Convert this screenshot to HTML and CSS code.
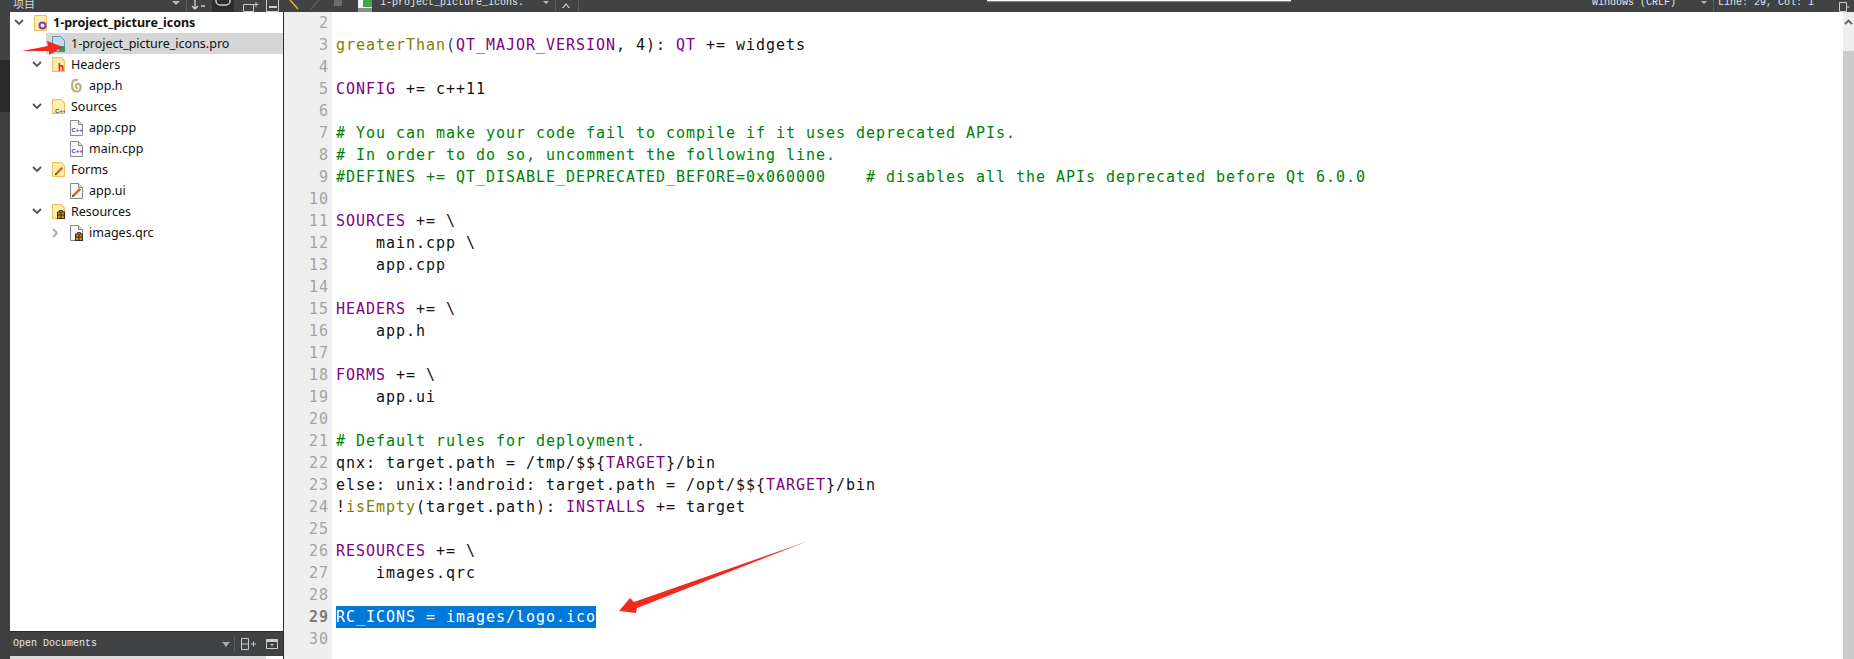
FILE: index.html
```html
<!DOCTYPE html>
<html lang="en">
<head>
<meta charset="utf-8">
<title>1-project_picture_icons.pro</title>
<link rel="stylesheet" href="styles.css">
</head>
<body>
<svg class="defs" width="0" height="0" aria-hidden="true">
  <symbol id="folder" viewBox="0 0 13 13" preserveAspectRatio="none"><path d="M.5.5h9l3 3v9H.5z" fill="#fdeeb0" stroke="#e8c35a"/></symbol>
  <symbol id="file" viewBox="0 0 13 16"><path d="M.5.5h8l4 4v11H.5z" fill="#f7f7f7" stroke="#8a8a8a"/><path d="M8.5.5v4h4" fill="#ddd" stroke="#8a8a8a"/></symbol>
  <symbol id="pencil" viewBox="0 0 12 12"><path d="M1 11l2-4 6-6 2 2-6 6z" fill="#d2691e"/><path d="M1 11l1-3 2 2z" fill="#333"/></symbol>
  <symbol id="bag" viewBox="0 0 8 9"><rect x=".5" y="2" width="7" height="6.500" fill="#c9902a" stroke="#3a2a10"/><path d="M2.500 2V.6h3V2M.5 5h7M4 2v6.500" fill="none" stroke="#3a2a10"/></symbol>
</svg>

<header class="topbar">
  <div class="panel-head">
    <span class="cn">项目</span>
    <span class="tb-right">
      <span class="tri"></span><span class="sep"></span>
      <svg class="tb-icon" width="16" height="12" viewBox="0 0 16 12"><path d="M5 0v9M2 6l3 3 3-3M11 6h4" fill="none" stroke="#ccc" stroke-width="1.400"/></svg>
      <span class="link-btn"><svg width="16" height="12" viewBox="0 0 16 12"><rect x="1" y="-4" width="14" height="9" rx="4" fill="none" stroke="#ccc" stroke-width="1.500"/></svg></span>
      <svg class="tb-icon" width="18" height="12" viewBox="0 0 18 12"><path d="M1.500 4.500h10v7h-10zM14 2v5M11.500 4.500h5" fill="none" stroke="#ccc"/></svg>
      <svg class="tb-icon" width="14" height="12" viewBox="0 0 14 12"><path d="M.5 0v11.500h12V0" fill="none" stroke="#ccc"/><path d="M3 6h8v2H3z" fill="#ccc"/></svg>
    </span>
  </div>
  <div class="edit-head">
    <svg width="12" height="10" viewBox="0 0 12 10"><path d="M2 0l8 9" stroke="#e0b520" stroke-width="1.600"/></svg>
    <svg width="12" height="10" viewBox="0 0 12 10"><path d="M2 9l8-9" stroke="#5c5e60" stroke-width="1.400"/></svg>
    <svg class="lock" width="10" height="8" viewBox="0 0 10 8"><rect width="8" height="6" x="1" fill="#6a6c6e"/></svg>
    <svg class="qt" width="14" height="12" viewBox="0 0 14 12"><path d="M0 0h14v12H0z" fill="#f4f4f4"/><path d="M5 0h9v7H5z" fill="#41a645"/><path d="M0 8h14v4H0z" fill="#8a8c8e"/></svg>
    <span class="pix doc-title">1-project_picture_icons.</span>
    <span class="tri small"></span><span class="sep"></span>
    <svg class="close" width="12" height="8" viewBox="0 0 12 8"><path d="M2 9l4-5 4 5" fill="none" stroke="#ccc" stroke-width="1.200"/></svg>
    <span class="sep"></span>
    <span class="flex-fill"></span>
    <span class="pix">Windows (CRLF)</span>
    <span class="tri small enc"></span><span class="sep"></span>
    <span class="pix line-col">Line: 29, Col: 1</span>
    <svg class="split" width="12" height="12" viewBox="0 0 12 12"><path d="M1.500 2.500h7v9h-7z" fill="none" stroke="#ccc"/><path d="M8.500 7h3" stroke="#ccc"/></svg>
  </div>
</header>

<div class="main">
  <div class="rail"><div class="rail-top"></div><div class="rail-active"></div></div>
  <aside class="sidebar">
    <div class="tree">
      <div class="row"><span class="twisty"><svg width="10" height="7" viewBox="0 0 10 7"><path d="M1 1l4 4 4-4" fill="none" stroke="#555" stroke-width="1.800"/></svg></span>
        <span class="cell root"><svg class="ic root-ic" width="13" height="16" viewBox="0 0 13 16"><path d="M.5.500h12v15H.5z" fill="#fdeeb0" stroke="#e8c35a"/><circle cx="8.500" cy="10.500" r="3" fill="none" stroke="#7a3db8" stroke-width="2"/></svg><b>1-project_picture_icons</b></span></div>

      <div class="row l1"><span class="twisty"></span>
        <span class="cell selected"><svg class="ic" width="13" height="16" viewBox="0 0 13 16"><path d="M.5.500h8l4 4v11H.5z" fill="#bcdcf5" stroke="#5f92b8"/><rect x="7" y="10" width="6" height="6" fill="#2e9e5b"/></svg><span>1-project_picture_icons.pro</span></span></div>

      <div class="row l1"><span class="twisty"><svg width="10" height="7" viewBox="0 0 10 7"><path d="M1 1l4 4 4-4" fill="none" stroke="#555" stroke-width="1.800"/></svg></span>
        <span class="cell"><svg class="ic" width="13" height="15" viewBox="0 0 13 15"><use href="#folder" width="13" height="15"/><text x="6" y="14" class="ov-h">h</text></svg><span>Headers</span></span></div>

      <div class="row l2"><span class="twisty"></span>
        <span class="cell"><svg class="ic" width="13" height="15" viewBox="0 0 13 15"><path d="M8 2.500C4 .5 2 3 2 7.500s2 6 5 6 4-3 3.500-5.500S7 5 6 7s.5 3.500 2 3" fill="none" stroke="#c2ad7d" stroke-width="2.200"/></svg><span>app.h</span></span></div>

      <div class="row l1"><span class="twisty"><svg width="10" height="7" viewBox="0 0 10 7"><path d="M1 1l4 4 4-4" fill="none" stroke="#555" stroke-width="1.800"/></svg></span>
        <span class="cell"><svg class="ic" width="13" height="15" viewBox="0 0 13 15"><use href="#folder" width="13" height="15"/><text x="3" y="14" class="ov-c">C++</text></svg><span>Sources</span></span></div>

      <div class="row l2"><span class="twisty"></span>
        <span class="cell"><svg class="ic" width="13" height="16" viewBox="0 0 13 16"><use href="#file"/><text x="1.500" y="12" class="ov-c blue">C++</text></svg><span>app.cpp</span></span></div>

      <div class="row l2"><span class="twisty"></span>
        <span class="cell"><svg class="ic" width="13" height="16" viewBox="0 0 13 16"><use href="#file"/><text x="1.500" y="12" class="ov-c blue">C++</text></svg><span>main.cpp</span></span></div>

      <div class="row l1"><span class="twisty"><svg width="10" height="7" viewBox="0 0 10 7"><path d="M1 1l4 4 4-4" fill="none" stroke="#555" stroke-width="1.800"/></svg></span>
        <span class="cell"><svg class="ic" width="13" height="15" viewBox="0 0 13 15"><use href="#folder" width="13" height="15"/><use href="#pencil" x="2" y="4" width="10" height="10"/></svg><span>Forms</span></span></div>

      <div class="row l2"><span class="twisty"></span>
        <span class="cell"><svg class="ic" width="13" height="16" viewBox="0 0 13 16"><use href="#file"/><use href="#pencil" x="1" y="4" width="11" height="11"/></svg><span>app.ui</span></span></div>

      <div class="row l1"><span class="twisty"><svg width="10" height="7" viewBox="0 0 10 7"><path d="M1 1l4 4 4-4" fill="none" stroke="#555" stroke-width="1.800"/></svg></span>
        <span class="cell"><svg class="ic" width="13" height="15" viewBox="0 0 13 15"><use href="#folder" width="13" height="15"/><use href="#bag" x="5" y="6" width="8" height="9"/></svg><span>Resources</span></span></div>

      <div class="row l2 qrc"><span class="twisty"><svg width="7" height="10" viewBox="0 0 7 10"><path d="M1 1l4 4-4 4" fill="none" stroke="#aaa" stroke-width="1.800"/></svg></span>
        <span class="cell"><svg class="ic" width="13" height="16" viewBox="0 0 13 16"><use href="#file"/><use href="#bag" x="5" y="7" width="8" height="9"/></svg><span>images.qrc</span></span></div>
    </div>
    <div class="docs-head">
      <span class="pix docs-title">Open Documents</span>
      <span class="tri big"></span><span class="sep tall"></span>
      <svg width="16" height="12" viewBox="0 0 16 12"><path d="M.5.500h7v11h-7zM.5 6h7M10 6h5M12.500 3.500v5" fill="none" stroke="#ccc"/></svg>
      <svg class="docs-close" width="12" height="10" viewBox="0 0 12 10"><path d="M.5.500h11v9H.5z" fill="none" stroke="#ccc"/><path d="M1 1h10v2H1zM4 5h4L6 7z" fill="#ccc"/></svg>
    </div>
    <div class="docs-list"></div>
  </aside>

  <section class="editor">
    <div class="gutter">
      <div>2</div><div>3</div><div>4</div><div>5</div><div>6</div><div>7</div><div>8</div><div>9</div><div>10</div><div>11</div><div>12</div><div>13</div><div>14</div><div>15</div><div>16</div><div>17</div><div>18</div><div>19</div><div>20</div><div>21</div><div>22</div><div>23</div><div>24</div><div>25</div><div>26</div><div>27</div><div>28</div><div class="current">29</div><div>30</div>
    </div>
    <div class="code">
      <div></div>
      <div><span class="f">greaterThan</span><span class="p">(</span><span class="v">QT_MAJOR_VERSION</span>, 4): <span class="v">QT</span> += widgets</div>
      <div></div>
      <div><span class="v">CONFIG</span> += c++11</div>
      <div></div>
      <div class="c"># You can make your code fail to compile if it uses deprecated APIs.</div>
      <div class="c"># In order to do so, uncomment the following line.</div>
      <div class="c">#DEFINES += QT_DISABLE_DEPRECATED_BEFORE=0x060000    # disables all the APIs deprecated before Qt 6.0.0</div>
      <div></div>
      <div><span class="v">SOURCES</span> += \</div>
      <div>    main.cpp \</div>
      <div>    app.cpp</div>
      <div></div>
      <div><span class="v">HEADERS</span> += \</div>
      <div>    app.h</div>
      <div></div>
      <div><span class="v">FORMS</span> += \</div>
      <div>    app.ui</div>
      <div></div>
      <div class="c"># Default rules for deployment.</div>
      <div>qnx: target.path = /tmp/$${<span class="v">TARGET</span>}/bin</div>
      <div>else: unix:!android: target.path = /opt/$${<span class="v">TARGET</span>}/bin</div>
      <div>!<span class="f">isEmpty</span>(target.path): <span class="v">INSTALLS</span> += target</div>
      <div></div>
      <div><span class="v">RESOURCES</span> += \</div>
      <div>    images.qrc</div>
      <div></div>
      <div><span class="sel">RC_ICONS = images/logo.ico</span></div>
      <div></div>
    </div>
    <div class="scrollbar">
      <svg class="sb-up" width="11" height="8" viewBox="0 0 11 8"><path d="M2 6l3.500-3.500L9 6" fill="none" stroke="#606060" stroke-width="1.800"/></svg>
      <div class="sb-handle"></div>
    </div>
  </section>
</div>

<div class="popup"></div>
<svg class="arrow arrow-a" width="44" height="20" viewBox="0 0 44 20"><path d="M0 11L26 6 25 1 41 7 27 15 27 11z" fill="#f02a1d"/></svg>
<svg class="arrow arrow-b" width="192" height="76" viewBox="0 0 192 76"><path d="M190 0L16 61 12 57 1 70 18 72 19 67z" fill="#f02a1d"/></svg>
</body>
</html>
```
FILE: styles.css
```css
* { box-sizing: border-box; }
html, body { margin: 0; padding: 0; height: 659px; overflow: hidden; background: #fff; }
body { display: flex; flex-direction: column; font-family: "Noto Sans", sans-serif; position: relative; }
.defs { position: absolute; }

.pix { font-family: "Liberation Mono", monospace; font-size: 10px; line-height: 12px; color: #e6e6e6; white-space: pre; }

.topbar { flex: 0 0 12px; height: 12px; display: flex; background: #404244; overflow: hidden; align-items: flex-end; color: #ddd; }
.panel-head { width: 284px; height: 12px; display: flex; align-items: flex-end; padding-left: 13px; }
.cn { font-family: "Noto Sans CJK SC", sans-serif; font-size: 11px; line-height: 14px; height: 14px; margin-bottom: 2px; color: #ddd; }
.tb-right { margin-left: auto; display: flex; align-items: flex-end; height: 12px; }
.tri { width: 0; height: 0; border-left: 4px solid transparent; border-right: 4px solid transparent; border-top: 4px solid #bbb; align-self: flex-start; margin-top: 1px; }
.tri.small { border-left-width: 3px; border-right-width: 3px; border-top-width: 3px; margin-top: 1px; }
.tri.big { border-left-width: 4px; border-right-width: 4px; border-top-width: 5px; border-top-color: #aaa; align-self: center; margin: 0 0 0 auto; }
.sep { width: 1px; height: 12px; background: #5a5c5e; margin-left: 6px; }
.sep.tall { height: 16px; align-self: center; margin-left: 4px; }
.tb-icon { margin-left: 3px; }
.link-btn { width: 22px; height: 12px; background: #2c2d2e; display: flex; justify-content: center; margin-left: 6px; margin-right: 5px; }
.tb-right .tb-icon:last-child { margin-right: 4px; margin-left: 6px; }

.edit-head { flex: 1; height: 12px; display: flex; align-items: flex-start; padding-left: 4px; }
.edit-head > svg { flex: none; }
.lock { margin-left: 12px; }
.qt { margin-left: 15px; margin-top: 0; }
.edit-head svg:nth-child(2) { margin-left: 9px; }
.doc-title { margin-left: 8px; margin-top: -3px; width: 163px; }
.close { margin-left: 4px; margin-top: 0; }
.flex-fill { flex: 1; }
.enc { margin-left: 25px; }
.edit-head .pix { margin-top: -3px; }
.edit-head .line-col { margin-left: 4px; width: 120px; }
.split { margin-right: 4px; }

.main { flex: 1; min-height: 0; display: flex; }
.rail { width: 10px; display: flex; flex-direction: column; background: #3e3f40; }
.rail-top { height: 48px; background: #404244; }
.rail-active { height: 52px; background: #2a2a2b; }

.sidebar { width: 274px; border-right: 1px solid #2b2b2b; display: flex; flex-direction: column; background: #fff; }
.tree { flex: 1; min-height: 0; font-size: 12.5px; color: #111; }
.row { height: 21px; display: flex; align-items: stretch; }
.row.l1 { padding-left: 18px; }
.row.l2 { padding-left: 36px; }
.twisty { flex: 0 0 18px; display: flex; align-items: center; justify-content: center; }
.cell { flex: 1; display: flex; align-items: center; white-space: pre; line-height: 21px; padding-left: 6px; }
.cell .ic { flex: none; margin-right: 6px; }
.cell.selected { background: #d6d6d6; }
.root { font-weight: 700; }
.root b { font-weight: 700; }

.ov-h { font: 700 10px "Liberation Sans", sans-serif; fill: #e01010; }
.ov-c { font: 700 6px "Liberation Sans", sans-serif; fill: #2c5a8c; }
.ov-c.blue { fill: #3a46b8; }

.docs-head { flex: 0 0 25px; height: 25px; background: #404244; border-top: 1px solid #2b2b2b; display: flex; align-items: center; padding: 0 5px 0 3px; }
.docs-title { font-size: 10px; }
.docs-head svg { flex: none; margin-left: 6px; }
.docs-head .docs-close { margin-left: 9px; }
.docs-list { flex: 0 0 3px; background: #dcdcdc; margin-right: 17px; }

.editor { flex: 1; min-width: 0; display: flex; background: #fff; }
.gutter, .code { font-family: "DejaVu Sans Mono", monospace; font-size: 15px; letter-spacing: .97px; line-height: 22px; }
.gutter > div, .code > div { height: 22px; }
.gutter { flex: 0 0 48px; background: #efefef; color: #a3a3a3; text-align: right; padding-right: 3px; }
.gutter .current { font-weight: 700; color: #7d7d7d; }
.code { flex: 1; min-width: 0; padding-left: 4px; color: #111; }
.code > div { white-space: pre; }
.v { color: #800080; }
.f { color: #808000; }
.p { color: #1a4a8a; }
.c { color: #008000; }
.sel { display: inline-block; background: #0078d7; color: #fff; height: 22px; }
.scrollbar { flex: 0 0 11px; background: #eee; display: flex; flex-direction: column; }
.sb-up { margin-top: 6px; flex: none; }
.sb-handle { margin-top: 25px; flex: 1; background: #cbcbcb; }

.popup { position: absolute; left: 987px; top: 0; width: 304px; height: 1px; background: #fff; box-shadow: 0 1px 1px #8c8c8c; }
.arrow { position: absolute; }
.arrow-a { left: 22px; top: 40px; }
.arrow-b { left: 618px; top: 541px; }
```
